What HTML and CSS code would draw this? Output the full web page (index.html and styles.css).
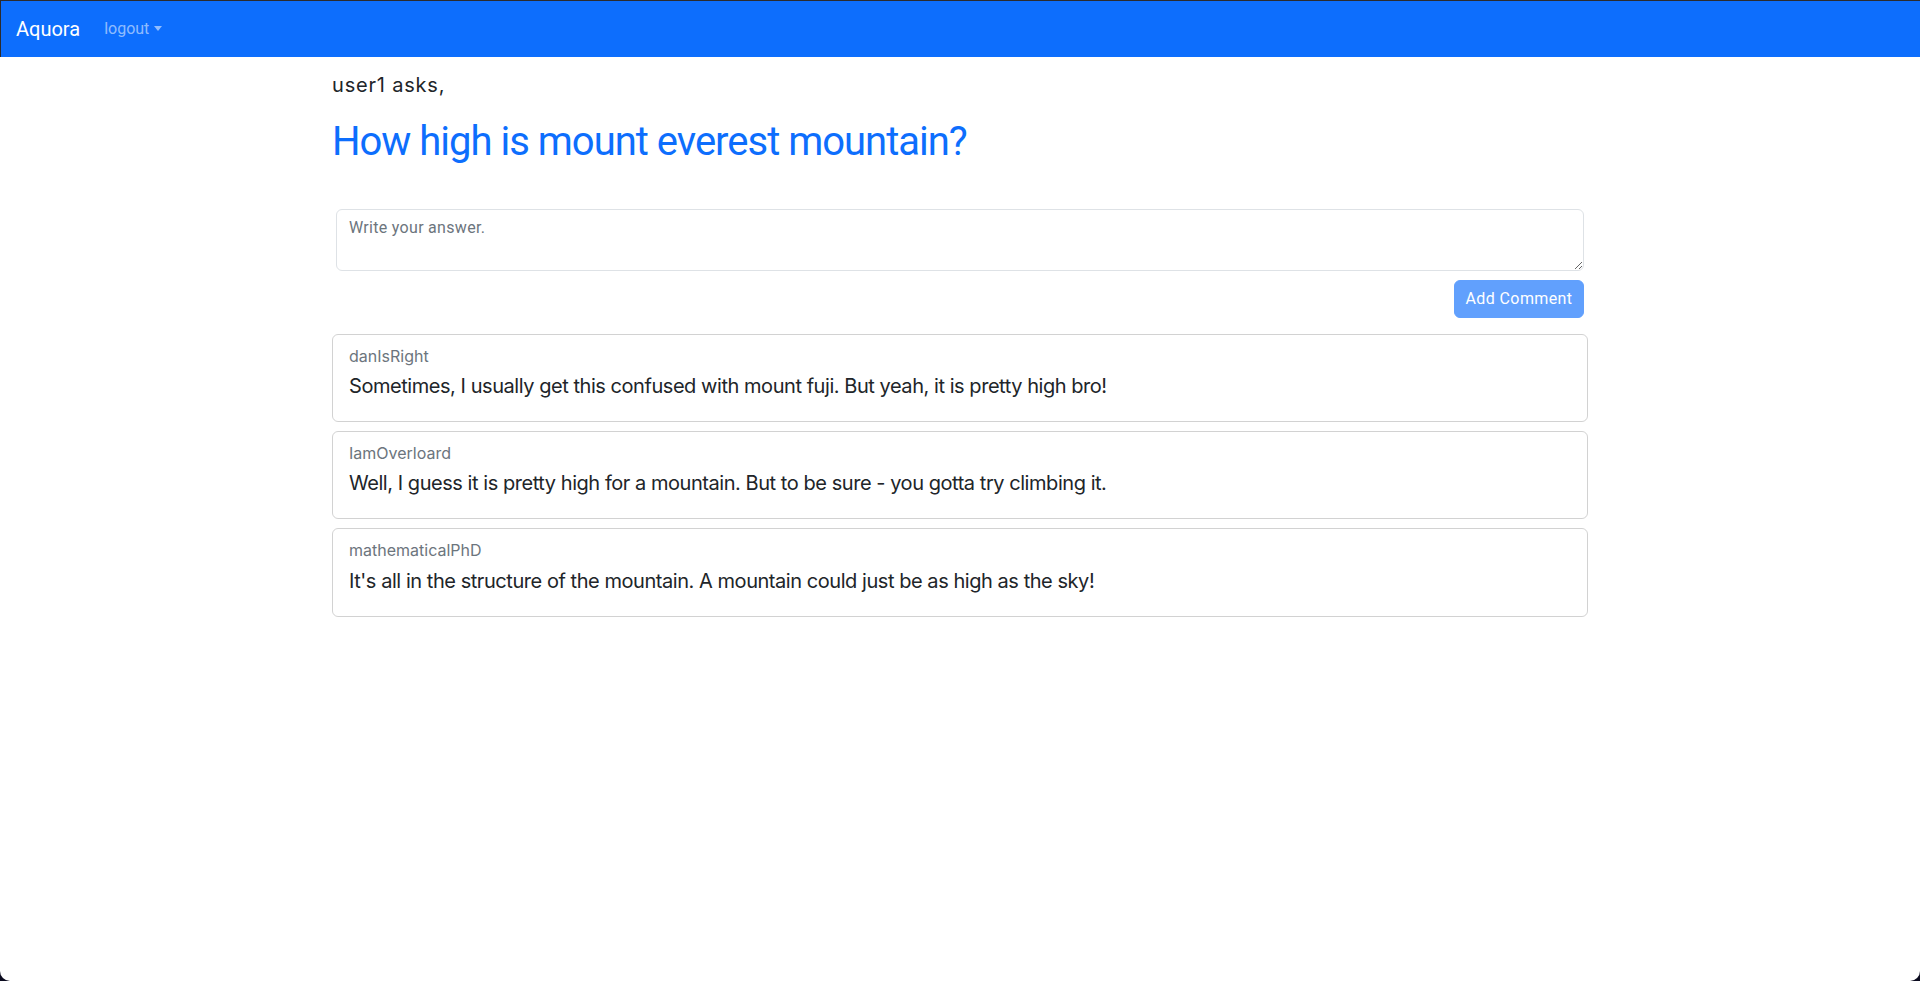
FILE: index.html
```html
<!DOCTYPE html>
<html lang="en">
<head>
<meta charset="utf-8">
<title>Aquora</title>
<link rel="stylesheet" href="styles.css">
</head>
<body>
<div class="window">
  <nav class="navbar">
    <a class="brand" href="#">Aquora</a>
    <a class="nav-link dropdown-toggle" href="#">logout</a>
  </nav>
  <main class="page">
    <h5 class="asker">user1 asks,</h5>
    <h1 class="question">How high is mount everest mountain?</h1>
    <form class="answer-form">
      <textarea class="answer-input" rows="2" placeholder="Write your answer."></textarea>
      <div class="actions">
        <button type="button" class="btn" disabled>Add Comment</button>
      </div>
    </form>
    <section class="comments">
      <div class="card">
        <h6 class="card-subtitle">danIsRight</h6>
        <h5 class="card-text">Sometimes, I usually get this confused with mount fuji. But yeah, it is pretty high bro!</h5>
      </div>
      <div class="card">
        <h6 class="card-subtitle">IamOverloard</h6>
        <h5 class="card-text">Well, I guess it is pretty high for a mountain. But to be sure - you gotta try climbing it.</h5>
      </div>
      <div class="card">
        <h6 class="card-subtitle">mathematicalPhD</h6>
        <h5 class="card-text">It's all in the structure of the mountain. A mountain could just be as high as the sky!</h5>
      </div>
    </section>
  </main>
</div>
</body>
</html>
```
FILE: styles.css
```css
* { box-sizing: border-box; }

html {
  background: #0a0a1e;
  height: 100%;
}

body {
  margin: 0;
  height: 100%;
  font-family: "Inter", "Liberation Sans", sans-serif;
  color: #212529;
  font-size: 16px;
  line-height: 1.5;
}

.window {
  height: 100%;
  background: #fff;
  border-radius: 0 0 10px 10px;
  overflow: hidden;
}

.navbar {
  height: 57px;
  background: #0d6efd;
  border-top: 1px solid #2b2b2e;
  border-left: 1px solid #2b2b2e;
  display: flex;
  align-items: center;
  padding: 0 15px;
  font-family: "Roboto", "Liberation Sans", sans-serif;
}

.brand {
  color: #fff;
  text-decoration: none;
  font-size: 20px;
  line-height: 30px;
  margin-right: 16px;
}

.nav-link {
  color: rgba(255, 255, 255, 0.55);
  text-decoration: none;
  font-size: 16px;
  line-height: 24px;
  padding: 0 8px;
}

.dropdown-toggle::after {
  content: "";
  display: inline-block;
  margin-left: 5px;
  vertical-align: 3px;
  border-top: 5px solid;
  border-right: 4.5px solid transparent;
  border-left: 4.5px solid transparent;
}

.page {
  max-width: 1280px;
  margin: 0 auto;
  padding: 0 12px;
}

.asker {
  margin: 16px 0 0;
  font-size: 20px;
  font-weight: 400;
  line-height: 1.2;
  letter-spacing: 0.8px;
}

.question {
  margin: 21px 0 0;
  font-family: "Roboto", "Liberation Sans", sans-serif;
  font-size: 40px;
  font-weight: 400;
  line-height: 1.2;
  letter-spacing: -1px;
  color: #0d6efd;
}

.answer-form {
  padding-top: 43px;
}

.answer-input {
  display: block;
  width: calc(100% - 8px);
  margin: 0 4px;
  height: 62px;
  padding: 6px 12px;
  font-family: "Roboto", "Liberation Sans", sans-serif;
  font-size: 16px;
  line-height: 24px;
  color: #212529;
  border: 1px solid #dee2e6;
  border-radius: 6px;
  resize: vertical;
  outline: none;
}

.answer-input::placeholder {
  color: #6c757d;
  letter-spacing: 0.3px;
}

.actions {
  display: flex;
  justify-content: flex-end;
  margin: 9px 4px 0;
}

.btn {
  width: 130px;
  height: 38px;
  padding: 6px 0;
  font-family: "Roboto", "Liberation Sans", sans-serif;
  font-size: 16px;
  line-height: 24px;
  letter-spacing: 0.4px;
  white-space: nowrap;
  color: #fff;
  background: #0d6efd;
  border: 1px solid #0d6efd;
  border-radius: 6px;
  opacity: 0.65;
}

.comments {
  margin-top: 16px;
}

.card {
  border: 1px solid rgba(0, 0, 0, 0.175);
  border-radius: 6px;
  padding: 12px 16px 16px;
  margin-bottom: 9px;
}

.card-subtitle {
  margin: 0 0 8px;
  font-size: 16px;
  font-weight: 400;
  line-height: 1.2;
  color: #6c757d;
}

.card-text {
  margin: 0 0 7px;
  font-size: 20px;
  font-weight: 400;
  line-height: 1.2;
  letter-spacing: -0.45px;
  color: #212529;
}
```
